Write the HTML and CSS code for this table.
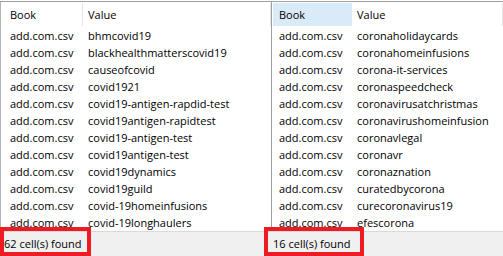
FILE: index.html
```html
<!DOCTYPE html>
<html>
<head>
<meta charset="utf-8">
<link rel="stylesheet" href="styles.css">
</head>
<body>
<div class="window">
  <div class="panes">
    <div class="pane pane-left">
      <div class="grid head">
        <div class="hcell c1">Book</div>
        <div class="hcell c2">Value</div>
      </div>
      <div class="grid rows">
        <div class="c1">add.com.csv</div><div class="c2">bhmcovid19</div>
        <div class="c1">add.com.csv</div><div class="c2">blackhealthmatterscovid19</div>
        <div class="c1">add.com.csv</div><div class="c2">causeofcovid</div>
        <div class="c1">add.com.csv</div><div class="c2">covid1921</div>
        <div class="c1">add.com.csv</div><div class="c2">covid19-antigen-rapdid-test</div>
        <div class="c1">add.com.csv</div><div class="c2">covid19antigen-rapidtest</div>
        <div class="c1">add.com.csv</div><div class="c2">covid19-antigen-test</div>
        <div class="c1">add.com.csv</div><div class="c2">covid19antigen-test</div>
        <div class="c1">add.com.csv</div><div class="c2">covid19dynamics</div>
        <div class="c1">add.com.csv</div><div class="c2">covid19guild</div>
        <div class="c1">add.com.csv</div><div class="c2">covid-19homeinfusions</div>
        <div class="c1">add.com.csv</div><div class="c2">covid-19longhaulers</div>
      </div>
    </div>
    <div class="pane pane-right">
      <div class="grid head">
        <div class="hcell c1 hover">Book</div>
        <div class="hcell c2">Value</div>
      </div>
      <div class="grid rows">
        <div class="c1">add.com.csv</div><div class="c2">coronaholidaycards</div>
        <div class="c1">add.com.csv</div><div class="c2">coronahomeinfusions</div>
        <div class="c1">add.com.csv</div><div class="c2">corona-it-services</div>
        <div class="c1">add.com.csv</div><div class="c2">coronaspeedcheck</div>
        <div class="c1">add.com.csv</div><div class="c2">coronavirusatchristmas</div>
        <div class="c1">add.com.csv</div><div class="c2">coronavirushomeinfusion</div>
        <div class="c1">add.com.csv</div><div class="c2">coronavlegal</div>
        <div class="c1">add.com.csv</div><div class="c2">coronavr</div>
        <div class="c1">add.com.csv</div><div class="c2">coronaznation</div>
        <div class="c1">add.com.csv</div><div class="c2">curatedbycorona</div>
        <div class="c1">add.com.csv</div><div class="c2">curecoronavirus19</div>
        <div class="c1">add.com.csv</div><div class="c2">efescorona</div>
      </div>
    </div>
  </div>
  <div class="status">
    <div class="status-left">62 cell(s) found</div>
    <div class="status-right">16 cell(s) found</div>
  </div>
  <div class="mark mark-left"></div>
  <div class="mark mark-right"></div>
</div>
</body>
</html>
```

FILE: styles.css
```css
* { box-sizing: border-box; }
html, body { margin: 0; padding: 0; background: #fff; }
body {
  font-family: "Open Sans", "Noto Sans", sans-serif;
  font-size: 11px;
  color: #000;
}
.window {
  position: relative;
  width: 503px;
  height: 256px;
  overflow: hidden;
  display: flex;
  flex-direction: column;
}
.panes {
  margin-top: 1px;
  height: 230px;
  border-top: 1px solid #a0a0a0;
  display: flex;
  overflow: hidden;
}
.pane {
  display: flex;
  flex-direction: column;
  padding-left: 1px;
  overflow: hidden;
}
.pane-left {
  width: 271px;
  border-left: 1px solid #b4b4b4;
}
.pane-right {
  flex: 1;
  border-left: 1px solid #a0a0a0;
}
.pane-left .grid { display: grid; grid-template-columns: 81px 1fr; }
.pane-right .grid { display: grid; grid-template-columns: 79px 151px; }
.head {
  padding: 1px 0 1px 0;
}
.hcell {
  height: 23px;
  line-height: 23px;
  border-right: 1px solid #e5e5e5;
  white-space: nowrap;
}
.hcell.hover { background: #d9ebf9; border-right-color: #d9ebf9; }
.rows > div {
  height: 17px;
  line-height: 17px;
  white-space: nowrap;
  overflow: hidden;
}
.pane-left .c1 { padding-left: 8px; }
.pane-right .c1 { padding-left: 6px; }
.c2 { padding-left: 5px; }
.status {
  flex: 1;
  background: #f0f0f0;
  border-top: 1px solid #dadada;
  display: flex;
  align-items: center;
  padding-bottom: 1px;
}
.status-left { width: 269px; padding-left: 4px; }
.status-right { padding-left: 4px; }
.mark {
  position: absolute;
  top: 227px;
  height: 29px;
  border: 4px solid #ed1c24;
}
.mark-left { left: 0; width: 91px; }
.mark-right { left: 264px; width: 100px; }
```
